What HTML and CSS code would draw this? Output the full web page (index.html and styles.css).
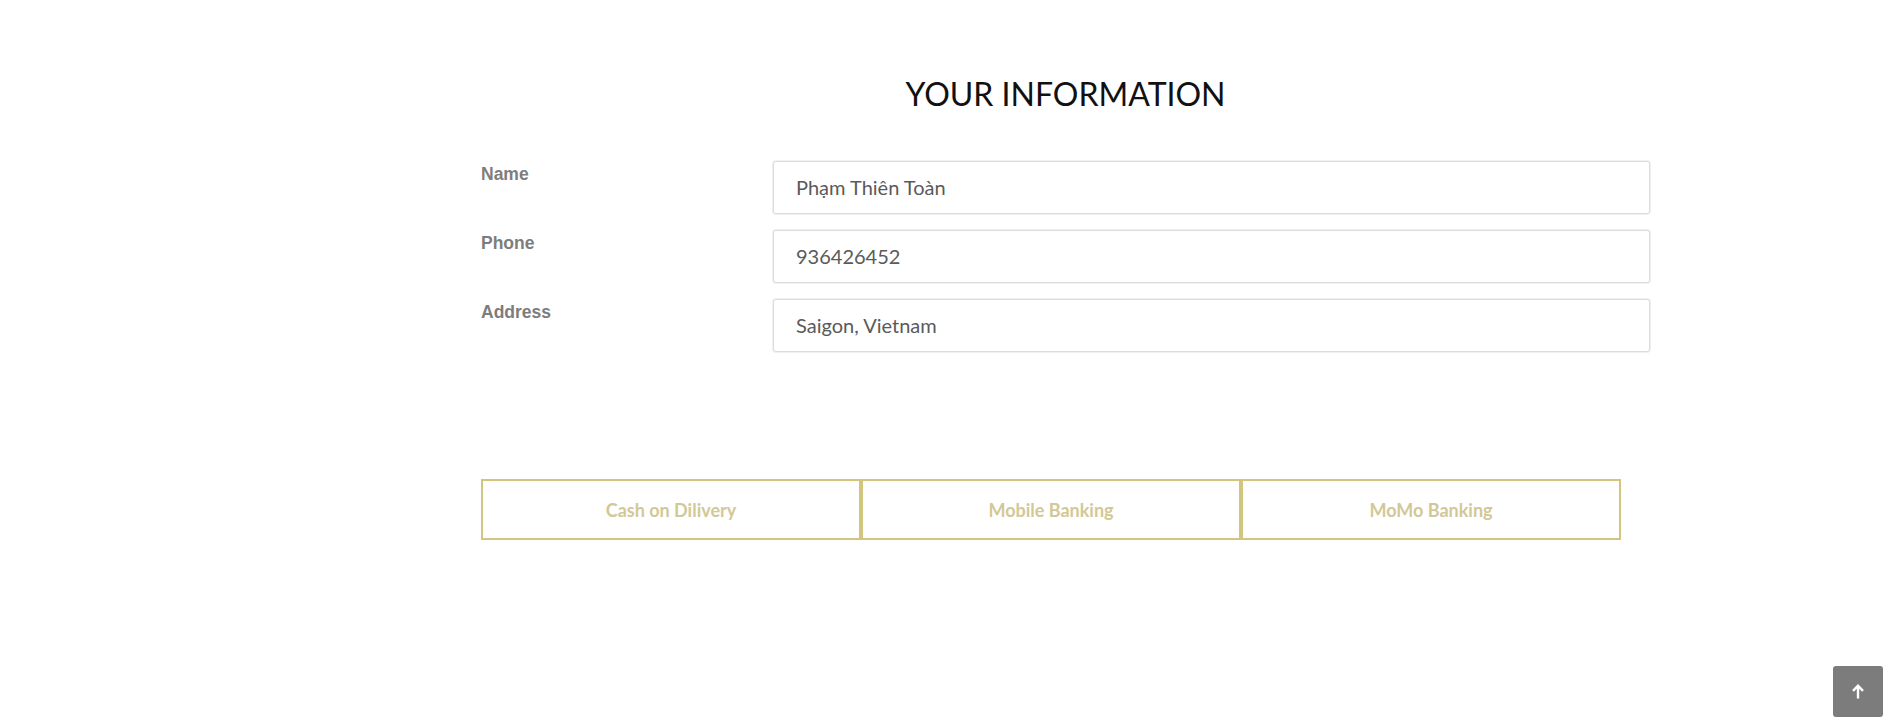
FILE: index.html
```html
<!DOCTYPE html>
<html lang="vi">
<head>
<meta charset="utf-8">
<title>Your information</title>
<link rel="stylesheet" href="styles.css">
</head>
<body>
<main class="page">
  <section class="content">
    <h1 class="title">YOUR INFORMATION</h1>
    <form class="info-form">
      <label class="field-label" for="name">Name</label>
      <input class="field-input" id="name" type="text" value="Phạm Thiên Toàn">
      <label class="field-label" for="phone">Phone</label>
      <input class="field-input" id="phone" type="text" value="936426452">
      <label class="field-label" for="address">Address</label>
      <input class="field-input" id="address" type="text" value="Saigon, Vietnam">
    </form>
    <div class="payments">
      <button class="pay-btn" type="button">Cash on Dilivery</button>
      <button class="pay-btn" type="button">Mobile Banking</button>
      <button class="pay-btn" type="button">MoMo Banking</button>
    </div>
  </section>
</main>
<button class="to-top" type="button" aria-label="Back to top">
  <svg width="12" height="15" viewBox="0 0 12 15" fill="none" stroke="#fff" stroke-width="2.4" stroke-linecap="butt" stroke-linejoin="miter">
    <path d="M6 14.5V2"/>
    <path d="M1 6.8L6 1.8L11 6.8"/>
  </svg>
</button>
</body>
</html>
```

FILE: styles.css
```css
* { box-sizing: border-box; }

html, body {
  margin: 0;
  padding: 0;
  background: #ffffff;
}

body {
  font-family: "Lato", "Liberation Sans", sans-serif;
  color: #222;
}

.page {
  padding-left: 228px;
}

.content {
  width: 1169px;
  margin: 0 auto;
}

.title {
  margin: 0;
  padding-top: 72px;
  height: 161px;
  font-family: "Lato", sans-serif;
  font-weight: 400;
  font-size: 32px;
  line-height: 44px;
  letter-spacing: 0;
  text-align: center;
  color: #111;
}

.info-form {
  display: grid;
  grid-template-columns: 292px 1fr;
  row-gap: 16px;
}

.field-label {
  font-family: "Liberation Sans", Arial, sans-serif;
  font-weight: 700;
  font-size: 17.5px;
  line-height: 20px;
  padding-top: 3px;
  color: #7d7d7d;
}

.field-input {
  height: 53px;
  width: 100%;
  margin: 0;
  padding: 0 22px 2px;
  border: 1px solid #dcdcdc;
  border-radius: 3px;
  box-shadow: 0 0 0 1px #f0f0f0;
  font-family: "Lato", sans-serif;
  font-size: 20px;
  color: #5a5a5a;
  background: #fff;
  outline: none;
}

.payments {
  display: flex;
  margin-top: 127px;
}

.pay-btn {
  width: 380px;
  height: 61px;
  margin: 0;
  padding: 0;
  border: 2px solid #d1c57f;
  background: #fff;
  font-family: "Lato", sans-serif;
  font-weight: 700;
  font-size: 18px;
  color: #d2c896;
  cursor: pointer;
}

.to-top {
  position: fixed;
  right: 20px;
  bottom: 7px;
  width: 50px;
  height: 51px;
  padding: 0;
  border: none;
  border-radius: 3px;
  background: #7c7c7c;
  display: flex;
  align-items: center;
  justify-content: center;
}
```
